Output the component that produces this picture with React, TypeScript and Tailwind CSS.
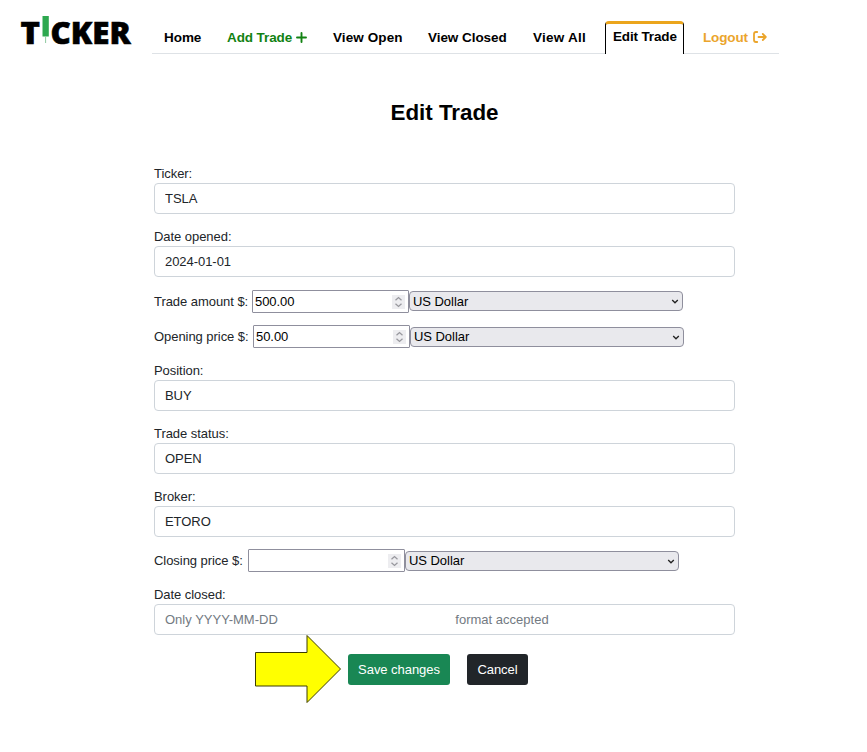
import React from "react";

function Field({ label, value, placeholder }: { label: string; value?: string; placeholder?: string }) {
  return (
    <div className="flex flex-col">
      <label className="h-[19px] leading-[19px]">{label}</label>
      <input
        type="text"
        defaultValue={value}
        placeholder={placeholder}
        className="h-[31px] w-[581px] rounded-[4px] border border-[#ced4da] bg-white px-[10px] pb-px text-[#212529] outline-none placeholder:tracking-[0.01px] placeholder:text-[#737a82] placeholder:opacity-100"
      />
    </div>
  );
}

function PriceRow({ label, labelWidth, value, selectOffset, selectText }: { label: string; labelWidth: string; value?: string; selectOffset: string; selectText?: string }) {
  return (
    <div className="flex h-[23px]">
      <label className={`${labelWidth} whitespace-nowrap leading-[24px]`}>{label}</label>
      <div className="flex h-[23px] w-[157px] items-center rounded-[1px] border border-[#8f8f9d] pl-[2px] pr-[3px]">
        <input type="text" defaultValue={value} className="w-0 flex-1 bg-transparent pt-px text-black outline-none" />
        <span className="flex h-[14px] w-[13px] items-center justify-center bg-[#ededf0]">
          <svg width="9" height="12" viewBox="0 0 9 12" fill="none" stroke="#98989e" strokeWidth="1.3">
            <path d="M1.5 4.2 4.5 1.6 7.5 4.2M1.5 7.8 4.5 10.4 7.5 7.8" />
          </svg>
        </span>
      </div>
      <div className={`relative ${selectOffset} h-[20px] w-[274px]`}>
        <select className={`block h-full w-full appearance-none rounded-[4px] border border-[#8f8f9d] bg-[#e9e9ed] pl-[3px] text-black ${selectText ?? ""}`}>
          <option>US Dollar</option>
        </select>
        <svg className="pointer-events-none absolute right-[4px] top-[7px]" width="8" height="7" viewBox="0 0 8 7" fill="none" stroke="#222" strokeWidth="1.3">
          <path d="M1.2 2 4 4.8 6.8 2" />
        </svg>
      </div>
    </div>
  );
}

function Logo() {
  return (
    <svg width="118" height="44" viewBox="0 0 118 44" overflow="visible">
      <g fontFamily="'Open Sans', sans-serif" fontWeight="800" fontSize="29.5" fill="#000" stroke="#000" strokeWidth="0.6">
        <text x="0.6" y="34.7" textLength="19.4" lengthAdjust="spacingAndGlyphs">T</text>
        <text x="30.6" y="34.7" textLength="80" lengthAdjust="spacingAndGlyphs">CKER</text>
      </g>
      <path d="M22.5 7h6.3v20.5h-6.3z" fill="#2da84f" />
      <path d="M25.6 27.5v6.5" stroke="#8fc9a0" strokeWidth="1" />
    </svg>
  );
}

export default function App() {
  return (
    <div className="relative min-h-[752px] w-[867px] overflow-hidden bg-white font-['Liberation_Sans',Arial,sans-serif] text-[13px] tracking-[-0.05px] text-[#212529]">
      <header className="flex h-[54px] pl-5">
        <div className="w-[132px] pt-[9px]">
          <Logo />
        </div>
        <nav className="flex h-[54px] w-[627px] whitespace-nowrap border-b border-[#dee2e6] pt-[21px] text-[13.5px] font-bold leading-[33px] tracking-[-0.05px] text-black">
          <a className="ml-[12px] w-[63px]">Home</a>
          <a className="flex w-[106px] items-center text-[#128212]">
            <span className="tracking-[-0.1px]">Add Trade</span>
            <svg className="ml-[4px]" width="11" height="11" viewBox="0 0 11 11" stroke="#128212" strokeWidth="1.9" strokeLinecap="round">
              <path d="M5.5 1v9M1 5.5h9" />
            </svg>
          </a>
          <a className="w-[95px] tracking-[0.1px]">View Open</a>
          <a className="w-[105px]">View Closed</a>
          <a className="w-[72px] tracking-[0.25px]">View All</a>
          <a className="h-[33px] w-[79px] rounded-t-[4px] border-x border-t-[3px] border-x-black border-t-[#eba51c] bg-white pl-[7px] leading-[25px] tracking-[-0.15px]">Edit Trade</a>
          <a className="ml-[19px] flex items-center text-[#eba52c]">
            <span className="tracking-[-0.15px]">Logout</span>
            <svg className="ml-[5px]" width="14" height="12" viewBox="0 0 14 12" fill="none" stroke="#eba52c" strokeWidth="1.8" strokeLinecap="round" strokeLinejoin="round">
              <path d="M4.2 1H3Q1 1 1 3v6Q1 11 3 11h1.2M5.5 6H12.5M9.8 3l3 3-3 3" />
            </svg>
          </a>
        </nav>
      </header>
      <main className="ml-[154px] w-[581px]">
        <h1 className="mt-[45px] h-[27px] text-center text-[22.4px] font-bold leading-[27px] tracking-[-0.03px] text-black">Edit Trade</h1>
        <form className="mt-[38px] flex flex-col">
          <div className="flex flex-col gap-[13px]">
            <Field label="Ticker:" value="TSLA" />
            <Field label="Date opened:" value="2024-01-01" />
          </div>
          <div className="mt-[13px]"><PriceRow label="Trade amount $:" labelWidth="w-[98px]" value="500.00" selectOffset="mt-px" /></div>
          <div className="mt-[12px]"><PriceRow label="Opening price $:" labelWidth="w-[99px]" value="50.00" selectOffset="mt-[2px]" selectText="pb-px leading-[17px]" /></div>
          <div className="mt-[13px] flex flex-col gap-[13px]">
            <Field label="Position:" value="BUY" />
            <Field label="Trade status:" value="OPEN" />
            <Field label="Broker:" value="ETORO" />
          </div>
          <div className="mt-[12px]"><PriceRow label="Closing price $:" labelWidth="w-[94px]" selectOffset="mt-[2px]" selectText="pb-px leading-[17px]" /></div>
          <div className="mt-[13px]">
            <Field label="Date closed:" placeholder={"Only YYYY-MM-DD" + "\u00a0".repeat(49) + "format accepted"} />
          </div>
          <div className="mt-[19px] flex gap-[17px] pl-[194px]">
            <button type="button" className="h-[31px] w-[102px] rounded-[3px] bg-[#198754] text-white">Save changes</button>
            <button type="button" className="h-[31px] w-[61px] rounded-[3px] bg-[#212529] text-white">Cancel</button>
          </div>
        </form>
      </main>
      <svg className="absolute left-[254px] top-[633px]" width="90" height="72" viewBox="0 0 90 72">
        <path d="M1.5 19.5H53V2.5L86.5 36 53 69.5V53H1.5Z" fill="#ff0" stroke="#3c3c00" strokeWidth="1" />
      </svg>
    </div>
  );
}
